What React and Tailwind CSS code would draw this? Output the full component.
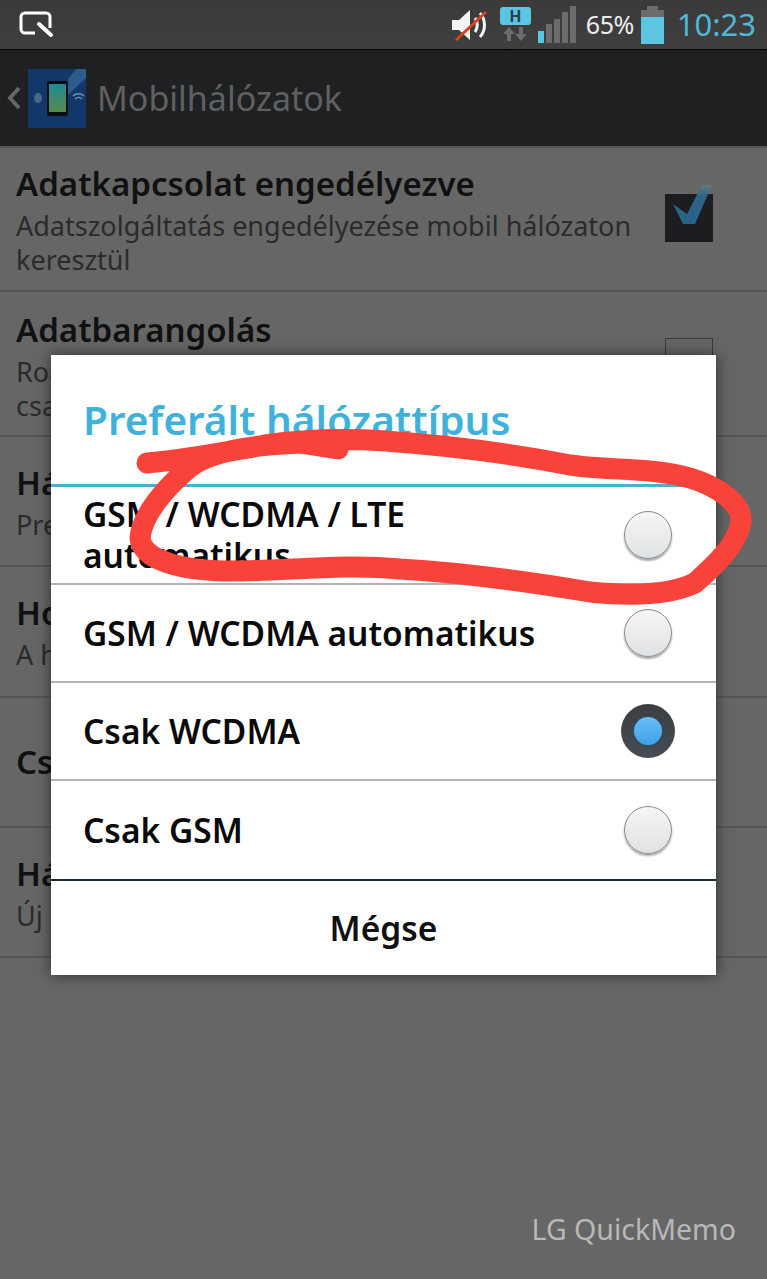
const font = { fontFamily: '"Noto Sans", "Open Sans", sans-serif' };

const rows = [
  { h: "h-[144px]", title: "Adatkapcsolat engedélyezve", sub: ["Adatszolgáltatás engedélyezése mobil hálózaton", "keresztül"], check: "on" },
  { h: "h-[145px]", title: "Adatbarangolás", sub: ["Roaming közben adatkapcsolat engedélyezése", "csatlakozáskor"], check: "off", pad: "pt-[4px]" },
  { h: "h-[130px]", title: "Hálózati mód", sub: ["Preferált hálózati mód"] },
  { h: "h-[131px]", title: "Hozzáférési pontok", sub: ["A hozzáférési pontok nevei"] },
  { h: "h-[130px]", title: "Csak 2G hálózat" },
  { h: "h-[130px]", title: "Hálózat", sub: ["Új hálózat keresése"] },
];

const options = [
  { label: ["GSM / WCDMA / LTE", "automatikus"] },
  { label: ["GSM / WCDMA automatikus"] },
  { label: ["Csak WCDMA"], selected: true },
  { label: ["Csak GSM"] },
];

function Radio({ selected }) {
  if (selected) {
    return (
      <div className="w-[54px] h-[54px] rounded-full bg-gradient-to-b from-[#3c3e42] to-[#474c55] flex items-center justify-center">
        <div className="w-[28px] h-[28px] rounded-full bg-gradient-to-b from-[#68bcf2] to-[#3fa4ea] shadow-[0_0_2px_#0b5d99]" />
      </div>
    );
  }
  return (
    <div className="w-[48px] h-[48px] rounded-full border border-[#8a8a8a] bg-gradient-to-b from-[#f6f6f6] to-[#dfe2e4] shadow-[0_2px_2px_rgba(0,0,0,0.35)]" />
  );
}

function StatusBar() {
  return (
    <div className="h-[50px] bg-gradient-to-b from-[#3a3a3a] to-[#3f3f3f] border-b border-black flex items-center justify-between pl-[19px] pr-[11px]">
      <svg width="35" height="28" viewBox="0 0 35 28" className="mt-[1px]">
        <path d="M16 22H6a4 4 0 0 1-4-4V6a4 4 0 0 1 4-4h21a4 4 0 0 1 4 4v11" fill="none" stroke="#fff" strokeWidth="3" />
        <path d="M20 13l12 11" fill="none" stroke="#fff" strokeWidth="4" strokeLinecap="round" />
      </svg>
      <div className="flex items-center">
        <svg width="42" height="36" viewBox="0 0 42 36" className="mr-[8px] ml-[2px]">
          <path d="M2 13h7l11-10v30L9 23H2z" fill="#f4f4f4" />
          <path d="M25 11c3 4 3 10 0 14M30 6c6 7 6 17 0 24" fill="none" stroke="#f4f4f4" strokeWidth="3" />
          <path d="M6 33L36 5" stroke="#d9421f" strokeWidth="3" />
        </svg>
        <div className="w-[31px] flex flex-col items-center mr-[7px]">
          <div className="w-[31px] h-[18px] rounded-[3px] bg-[#5cc6e2] text-[#27414d] text-[16px] leading-[18px] font-bold text-center">H</div>
          <svg width="26" height="16" viewBox="0 0 26 16" className="mt-[1px]">
            <path d="M7 1l6 7H9v7H5V8H1zM19 15l6-7h-4V1h-4v7h-4z" fill="#6c6c6c" />
          </svg>
        </div>
        <svg width="39" height="37" viewBox="0 0 39 37" className="mr-[9px]">
          <rect x="0" y="25" width="6" height="12" fill="#5cc6e2" />
          <rect x="8" y="18" width="6" height="19" fill="#6c6c6c" />
          <rect x="16" y="13" width="6" height="24" fill="#6c6c6c" />
          <rect x="24" y="6" width="6" height="31" fill="#6c6c6c" />
          <rect x="32" y="0" width="6" height="37" fill="#6c6c6c" />
        </svg>
        <span className="text-[25px] leading-none text-[#eeeeee] tracking-[-0.5px] mr-[7px]">65%</span>
        <div className="w-[23px] h-[38px] flex flex-col items-center mr-[13px] mt-[1px]">
          <div className="w-[11px] h-[4px] bg-[#6c6c6c]" />
          <div className="w-[23px] h-[7px] bg-[#6c6c6c]" />
          <div className="w-[23px] h-[27px] bg-[#5cc6e2]" />
        </div>
        <span className="text-[31px] leading-none text-[#4fb8d4]">10:23</span>
      </div>
    </div>
  );
}

function ActionBar() {
  return (
    <div className="h-[96px] bg-[#1f2022] flex items-center pl-[6px]">
      <svg width="16" height="26" viewBox="0 0 16 26" className="mr-[6px]">
        <path d="M13 3L4 13l9 10" fill="none" stroke="#666" strokeWidth="4" />
      </svg>
      <svg width="58" height="59" viewBox="0 0 58 59" className="mr-[11px]">
        <defs>
          <linearGradient id="scr" x1="0" y1="0" x2="0" y2="1">
            <stop offset="0" stopColor="#1d8a96" />
            <stop offset="1" stopColor="#5a8a4a" />
          </linearGradient>
        </defs>
        <rect width="58" height="59" fill="#12386a" />
        <path d="M58 0v9L40 26V10L48 0z" fill="#2d5c8c" />
        <rect x="19" y="12" width="21" height="35" rx="2" fill="#0b0d12" />
        <rect x="21" y="15" width="17" height="28" fill="url(#scr)" />
        <ellipse cx="10" cy="29" rx="4" ry="5" fill="#47688a" />
        <path d="M45 27c3-3 8-3 11 0M47 30c2-2 5-2 7 0" fill="none" stroke="#6f93b3" strokeWidth="1.5" />
      </svg>
      <span className="text-[34px] leading-none text-[#5f6061]">Mobilhálózatok</span>
    </div>
  );
}

function SettingsRow({ row }) {
  return (
    <div className={`${row.h} ${row.pad || ""} border-b-2 border-[#555555] pl-[16px] pr-[54px] flex items-center justify-between`}>
      <div className="min-w-0 whitespace-nowrap">
        <div className="text-[33px] leading-[44px] font-semibold text-[#111111]">{row.title}</div>
        {row.sub && (
          <div className="mt-[3px]">
            {row.sub.map((s) => (
              <div key={s} className="text-[27px] leading-[34px] text-[#2b2b2b]">{s}</div>
            ))}
          </div>
        )}
      </div>
      {row.check === "on" && (
        <div className="relative w-[48px] h-[48px] -mt-[3px] bg-[#1b1d20] shrink-0">
          <svg width="52" height="60" viewBox="0 0 52 60" className="absolute left-0 top-[-10px]">
            <defs>
              <linearGradient id="tick" x1="0" y1="1" x2="0" y2="0">
                <stop offset="0" stopColor="#2a6288" />
                <stop offset="0.7" stopColor="#2c6488" />
                <stop offset="1" stopColor="#667882" />
              </linearGradient>
            </defs>
            <path d="M8 20l14 10L37 1h10L30 40H18z" fill="url(#tick)" />
          </svg>
        </div>
      )}
      {row.check === "off" && <div className="w-[48px] h-[48px] -mt-[8px] border border-[#3a3a3a] shrink-0" />}
    </div>
  );
}

function Dialog() {
  return (
    <div className="absolute left-[51px] top-[355px] w-[665px] h-[620px] bg-white shadow-[0_0_14px_rgba(0,0,0,0.55)] flex flex-col">
      <div className="h-[132px] shrink-0 border-b-[3px] border-[#42b4d8] flex items-end pl-[32px] pb-[39px]">
        <span className="text-[40.5px] leading-[50px] font-semibold text-[#3fb2dc]">Preferált hálózattípus</span>
      </div>
      {options.map((o, i) => (
        <div key={o.label[0]} className={`h-[98px] shrink-0 ${i < 3 ? "border-b-2 border-[#b0b3b7]" : ""} flex items-center justify-between pl-[32px] pr-[41px]`}>
          <div className="text-[33.5px] leading-[41px] font-semibold text-[#0a0a0a] whitespace-nowrap">
            {o.label.map((l) => <div key={l}>{l}</div>)}
          </div>
          <div className="w-[54px] flex justify-center"><Radio selected={o.selected} /></div>
        </div>
      ))}
      <div className="flex-1 border-t-2 border-[#1c2b33] flex items-center justify-center">
        <span className="text-[33.5px] font-semibold text-[#111111]">Mégse</span>
      </div>
    </div>
  );
}

function Scribble() {
  return (
    <svg width="767" height="1279" viewBox="0 0 767 1279" className="absolute left-0 top-0 pointer-events-none">
      <path
        d="M147 463C185 460 225 452 265 445C300 440 340 438 385 441C440 445 510 453 570 465C610 471 650 467 690 478C720 487 743 505 741 522C737 545 715 565 695 583C670 595 630 596 590 592C530 582 470 573 400 569C340 563 280 572 225 571C180 570 142 560 140 538C142 515 165 488 190 467C210 452 250 445 300 443L338 449"
        fill="none"
        stroke="#f9423a"
        strokeWidth="21"
        strokeLinecap="round"
        strokeLinejoin="round"
      />
    </svg>
  );
}

export default function App() {
  return (
    <div className="relative w-[767px] h-[1279px] overflow-hidden bg-[#666666]" style={font}>
      <StatusBar />
      <ActionBar />
      <div className="border-t-2 border-[#555555]">
        {rows.map((r) => <SettingsRow key={r.title} row={r} />)}
      </div>
      <Dialog />
      <Scribble />
      <span className="absolute right-[31px] bottom-[36px] text-[28.5px] leading-none text-[#b8b8b8]">LG QuickMemo</span>
    </div>
  );
}
